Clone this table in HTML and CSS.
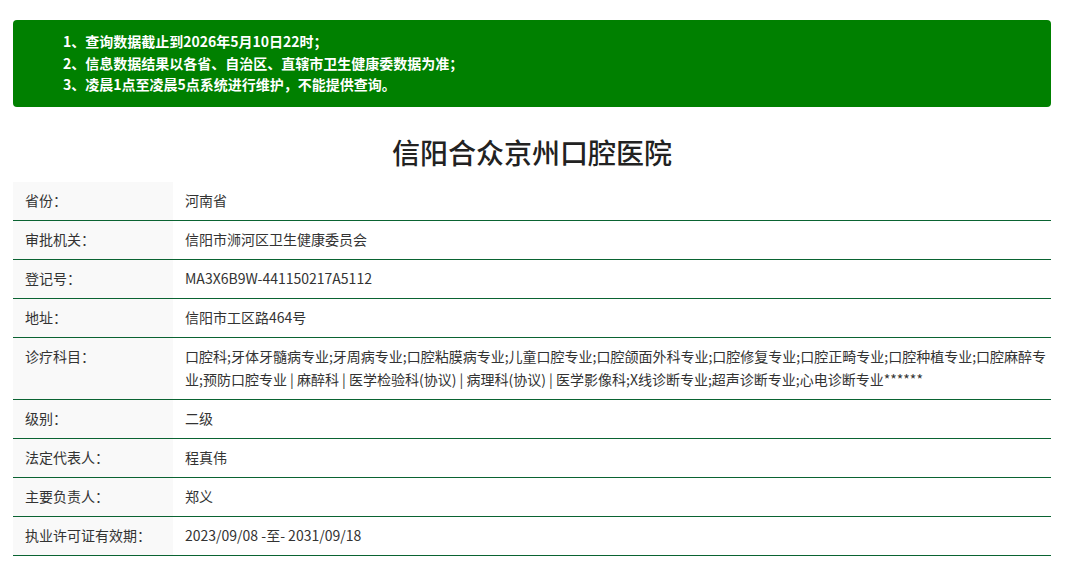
FILE: index.html
```html
<!DOCTYPE html>
<html lang="zh-CN">
<head>
<meta charset="utf-8">
<title>信阳合众京州口腔医院</title>
<link rel="stylesheet" href="styles.css">
</head>
<body>
<div class="page">
  <div class="notice">
    <p>1、查询数据截止到2026年5月10日22时；</p>
    <p>2、信息数据结果以各省、自治区、直辖市卫生健康委数据为准；</p>
    <p>3、凌晨1点至凌晨5点系统进行维护，不能提供查询。</p>
  </div>
  <h1 class="title">信阳合众京州口腔医院</h1>
  <table class="info">
    <tr><th>省份：</th><td>河南省</td></tr>
    <tr><th>审批机关：</th><td>信阳市浉河区卫生健康委员会</td></tr>
    <tr><th>登记号：</th><td>MA3X6B9W-441150217A5112</td></tr>
    <tr><th>地址：</th><td>信阳市工区路464号</td></tr>
    <tr><th>诊疗科目：</th><td>口腔科;牙体牙髓病专业;牙周病专业;口腔粘膜病专业;儿童口腔专业;口腔颌面外科专业;口腔修复专业;口腔正畸专业;口腔种植专业;口腔麻醉专业;预防口腔专业 | 麻醉科 | 医学检验科(协议) | 病理科(协议) | 医学影像科;X线诊断专业;超声诊断专业;心电诊断专业******</td></tr>
    <tr><th>级别：</th><td>二级</td></tr>
    <tr><th>法定代表人：</th><td>程真伟</td></tr>
    <tr><th>主要负责人：</th><td>郑义</td></tr>
    <tr><th>执业许可证有效期：</th><td>2023/09/08 -至- 2031/09/18</td></tr>
  </table>
</div>
</body>
</html>
```
FILE: styles.css
```css
html, body {
  margin: 0;
  padding: 0;
  background: #fff;
}
body {
  font-family: "Noto Sans CJK SC", "Open Sans", sans-serif;
  color: #333;
  font-size: 14px;
}
.page {
  padding: 20px 15px 0 13px;
}
.notice {
  background: #008000;
  color: #fff;
  border-radius: 4px;
  padding: 11px 15px 11px 50px;
  line-height: 21.5px;
  font-size: 14px;
  font-weight: 700;
}
.notice p {
  margin: 0;
}
.title {
  margin: 0;
  padding: 25px 0 10px;
  text-align: center;
  font-size: 28px;
  font-weight: 500;
  line-height: 40px;
  color: #222;
}
.info {
  width: 100%;
  border-collapse: collapse;
}
.info th, .info td {
  text-align: left;
  vertical-align: top;
  padding: 7.5px 12px;
  line-height: 23px;
  font-size: 14px;
  border-bottom: 1px solid #0a6332;
}
.info td {
  padding-right: 4px;
}
.info th {
  width: 136px;
  background: #f9f9f9;
  font-weight: 400;
}
```
